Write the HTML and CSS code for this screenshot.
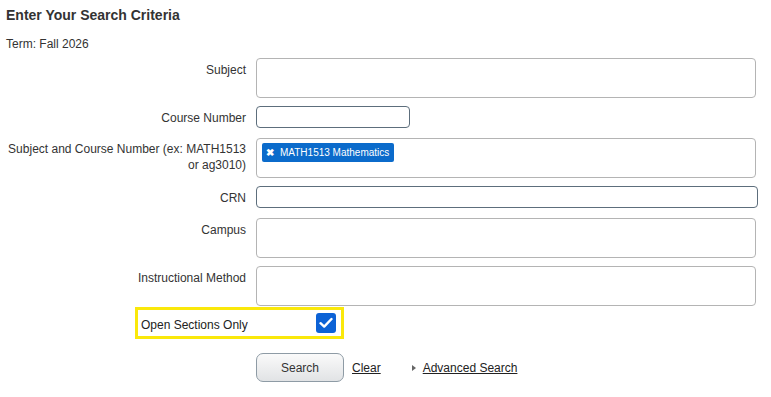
FILE: index.html
```html
<!DOCTYPE html>
<html lang="en">
<head>
  <meta charset="UTF-8">
  <title>Enter Your Search Criteria</title>
  <link rel="stylesheet" href="styles.css">
</head>
<body>
  <div class="page">
    <h2 class="title">Enter Your Search Criteria</h2>
    <div class="term">Term: Fall 2026</div>

    <div class="criteria">
      <label class="lbl">Subject</label>
      <div class="field"><div class="multi"></div></div>

      <label class="lbl">Course Number</label>
      <div class="field short"><input class="txt course" type="text"></div>

      <label class="lbl two">Subject and Course Number (ex: MATH1513 or ag3010)</label>
      <div class="field">
        <div class="multi">
          <span class="tag"><span class="tag-x">&#10006;</span>MATH1513 Mathematics</span>
        </div>
      </div>

      <label class="lbl">CRN</label>
      <div class="field short"><input class="txt crn" type="text"></div>

      <label class="lbl">Campus</label>
      <div class="field"><div class="multi"></div></div>

      <label class="lbl">Instructional Method</label>
      <div class="field"><div class="multi"></div></div>
    </div>

    <div class="open-row">
      <div class="open-box">
        <span class="open-lbl">Open Sections Only</span>
        <span class="check">
          <svg width="14" height="12" viewBox="0 0 14 12"><path d="M1.5 6.2 L5.2 9.6 L12.5 2" fill="none" stroke="#fff" stroke-width="2.4" stroke-linecap="round" stroke-linejoin="round"/></svg>
        </span>
      </div>
    </div>

    <div class="actions">
      <button class="btn">Search</button>
      <a class="link" href="#">Clear</a>
      <span class="adv"><span class="arrow"></span><a class="link" href="#">Advanced Search</a></span>
    </div>
  </div>
</body>
</html>
```

FILE: styles.css
```css
body {
  margin: 0;
  font-family: "Liberation Sans", Arial, sans-serif;
  font-size: 12px;
  color: #333;
  background: #fff;
}
.page {
  padding: 7px 6px 0 6px;
}
.title {
  margin: 0;
  font-size: 14px;
  font-weight: bold;
  line-height: 16px;
  color: #333;
}
.term {
  margin-top: 14px;
  line-height: 14px;
}
.criteria {
  display: grid;
  grid-template-columns: 240px 502px;
  column-gap: 10px;
  row-gap: 8px;
  margin-top: 7px;
}
.lbl {
  text-align: right;
  line-height: 16px;
  padding-top: 4px;
}
.lbl.two {
  padding-top: 3px;
}
.field {
  height: 40px;
}
.field.short {
  height: 24px;
}
.multi {
  box-sizing: border-box;
  width: 500px;
  height: 40px;
  border: 1px solid #b4b4b4;
  border-radius: 4px;
  padding: 4px 5px;
}
.txt {
  box-sizing: border-box;
  display: block;
  height: 22px;
  margin: 0;
  border: 1px solid #5d6e7c;
  border-radius: 4px;
  padding: 0 4px;
  font: inherit;
}
.course {
  width: 154px;
}
.crn {
  width: 502px;
}
.tag {
  display: inline-flex;
  align-items: center;
  height: 19px;
  padding: 0 5px 0 4px;
  background: #0b6bcb;
  border-radius: 2px;
  color: #fff;
  font-size: 10px;
}
.tag-x {
  font-size: 10px;
  font-weight: bold;
  margin-right: 6px;
}
.open-row {
  padding-left: 129px;
  margin-top: 1px;
}
.open-box {
  box-sizing: border-box;
  width: 209px;
  height: 32px;
  border: 3px solid #fae80a;
  display: flex;
  align-items: center;
  justify-content: space-between;
  padding: 0 5px 0 3px;
  color: #222;
}
.open-lbl {
  padding-top: 3px;
}
.check {
  width: 20px;
  height: 20px;
  background: #0c62d6;
  border-radius: 3px;
  display: flex;
  align-items: center;
  justify-content: center;
}
.actions {
  display: flex;
  align-items: center;
  margin-top: 14px;
  padding-left: 250px;
}
.btn {
  width: 88px;
  height: 29px;
  border: 1px solid #8e9ba5;
  border-radius: 7px;
  background: linear-gradient(#fafafa, #e1e3e5);
  font: inherit;
  color: #333;
  padding: 0;
}
.link {
  color: #222;
  text-decoration: underline;
}
.btn + .link {
  margin-left: 8px;
}
.adv {
  display: flex;
  align-items: center;
  margin-left: 31px;
}
.arrow {
  width: 0;
  height: 0;
  border-top: 3px solid transparent;
  border-bottom: 3px solid transparent;
  border-left: 4px solid #666;
  margin-right: 7px;
}
```
